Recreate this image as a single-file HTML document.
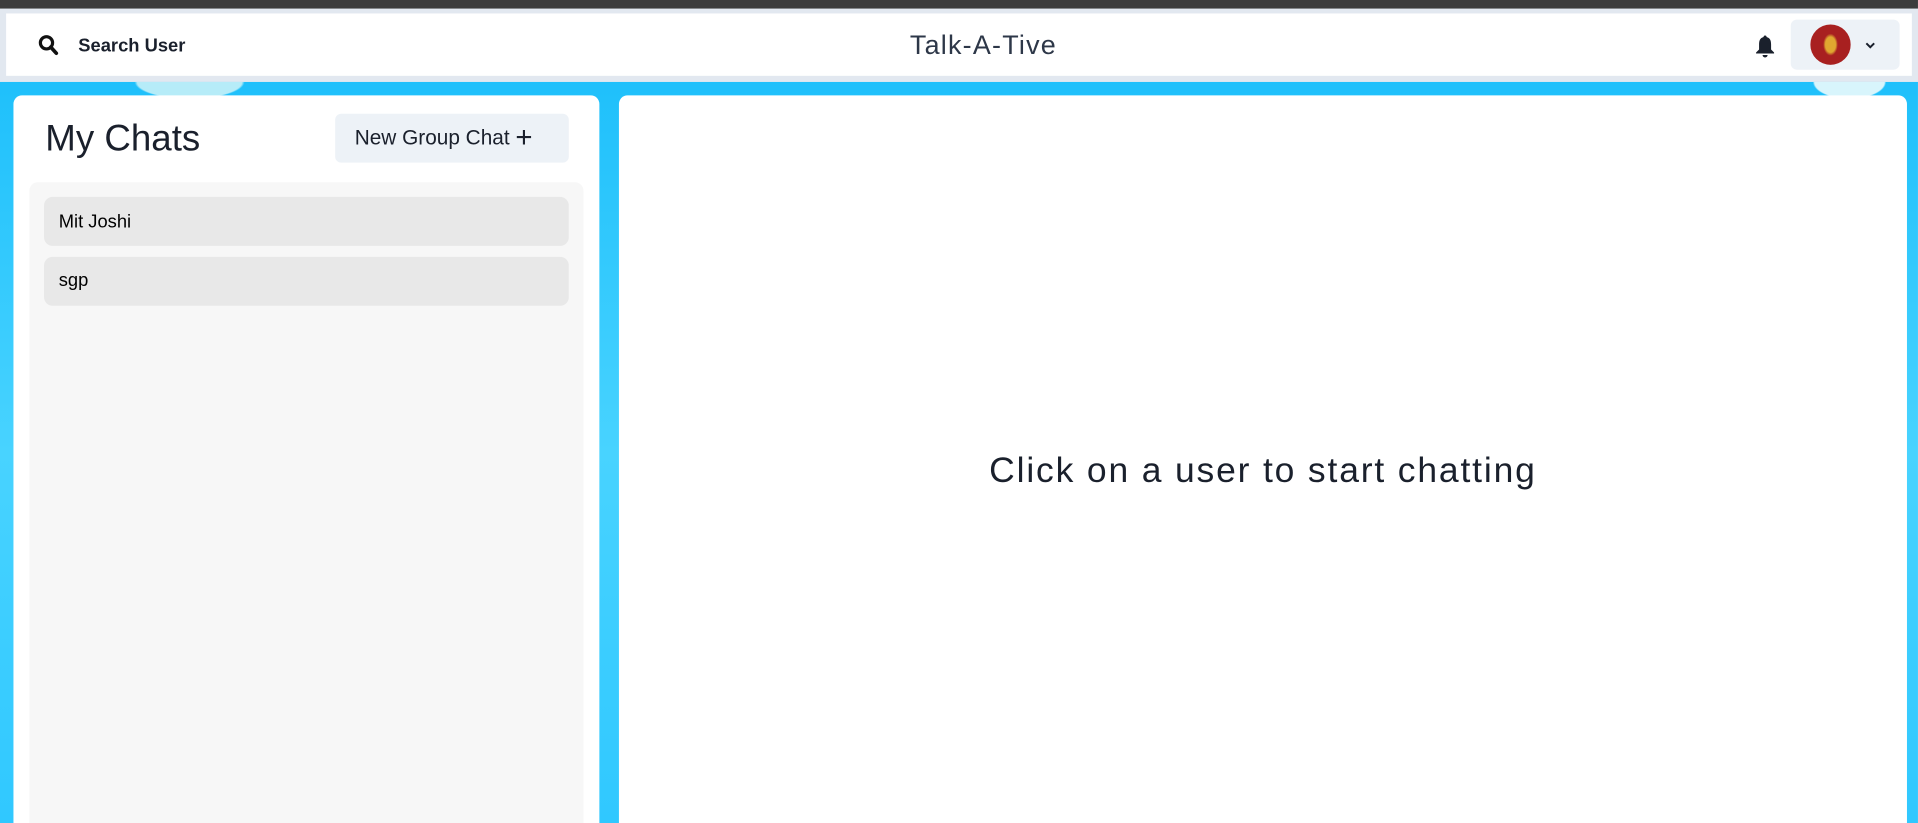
<!DOCTYPE html>
<html><head><style>
html,body{margin:0;padding:0;overflow:hidden}
body{width:1918px;height:823px;overflow:hidden;font-family:"Liberation Sans",sans-serif;background:#e2e8f0;position:relative}
#w{position:absolute;left:0;top:0;width:1568px;height:673px;transform:scale(1.2232);transform-origin:0 0;background:#e2e8f0;overflow:hidden}
.top{position:absolute;left:0;top:0;width:1568px;height:7px;background:#3c3c3c}
.hdr{position:absolute;left:5px;top:11px;width:1558px;height:51px;background:#fff}
.bg{position:absolute;left:0;top:67px;width:1568px;height:606px;background:radial-gradient(ellipse 45px 14px at 155px 0,#b6ecf8 0 95%,transparent 100%),radial-gradient(ellipse 30px 14px at 1512px 0,#d8f5fc 0 95%,transparent 100%),linear-gradient(180deg,#1fc0fb,#48d3ff 50%,#30c8ff)}
.lp{position:absolute;left:11px;top:78px;width:479px;height:595px;background:#fff;border-radius:7px 7px 0 0;overflow:hidden}
.rp{position:absolute;left:506px;top:78px;width:1053px;height:595px;background:#fff;border-radius:7px 7px 0 0}
</style></head><body><div id="w">
<div class="top"></div>
<div class="hdr">
<svg style="position:absolute;left:26px;top:17px" width="17" height="18" viewBox="0 0 17 18"><circle cx="7" cy="7" r="5" fill="none" stroke="#111" stroke-width="2.6"/><path d="M10.5 10.5l4.5 5" stroke="#111" stroke-width="3" stroke-linecap="round"/></svg>
<div style="position:absolute;left:59px;top:18px;font-size:15px;font-weight:bold;color:#1a202c">Search User</div>
<div style="position:absolute;left:0;width:1598px;text-align:center;top:13px;font-size:22px;color:#2d3748;letter-spacing:1px">Talk-A-Tive</div>
<svg style="position:absolute;left:1429px;top:16px" width="18" height="22" viewBox="0 0 22 26"><path d="M11 2c1 0 1.5.6 1.5 1.5C16 4.5 17 7 17 11v5l3 3v1H2v-1l3-3v-5c0-4 1-6.5 4.5-7.5C9.5 2.6 10 2 11 2z" fill="#1a202c"/><path d="M8.5 21.5h5a2.5 2.5 0 0 1-5 0z" fill="#1a202c"/></svg>
<div style="position:absolute;left:1459px;top:5px;width:89px;height:41px;background:#edf2f7;border-radius:5px">
<div style="position:absolute;left:16px;top:4px;width:33px;height:33px;border-radius:50%;background:radial-gradient(ellipse 6px 9px at 50% 50%,#e0a830 0 70%,#a82020 100%),radial-gradient(circle,#5a1c1c 40%,#3a1414 100%)"></div>
<svg style="position:absolute;left:60px;top:17px" width="10" height="8" viewBox="0 0 12 10"><path d="M2 3l4 4 4-4" fill="none" stroke="#1a202c" stroke-width="2"/></svg>
</div>
</div>
<div class="bg"></div>
<div class="lp">
<div style="position:absolute;left:26px;top:19px;font-size:30px;color:#1a202c">My Chats</div>
<div style="position:absolute;left:263px;top:15px;width:191px;height:40px;background:#edf2f7;border-radius:5px;font-size:17px;color:#1a202c;line-height:40px;padding-left:16px;box-sizing:border-box;white-space:nowrap">New Group Chat <span style="font-size:24px;vertical-align:-2px">+</span></div>
<div style="position:absolute;left:13px;top:71px;width:453px;height:560px;background:#f7f7f7;border-radius:7px">
<div style="position:absolute;left:12px;top:12px;width:429px;height:40px;background:#e8e8e8;border-radius:7px;font-size:15px;line-height:42px;padding-left:12px;box-sizing:border-box;color:#000">Mit Joshi</div>
<div style="position:absolute;left:12px;top:61px;width:429px;height:40px;background:#e8e8e8;border-radius:7px;font-size:15px;line-height:40px;padding-left:12px;box-sizing:border-box;color:#000">sgp</div>
</div>
</div>
<div class="rp">
<div style="position:absolute;left:0;width:1053px;text-align:center;top:291px;font-size:29px;color:#1a202c;letter-spacing:1.5px">Click on a user to start chatting</div>
</div>
</div></body></html>
